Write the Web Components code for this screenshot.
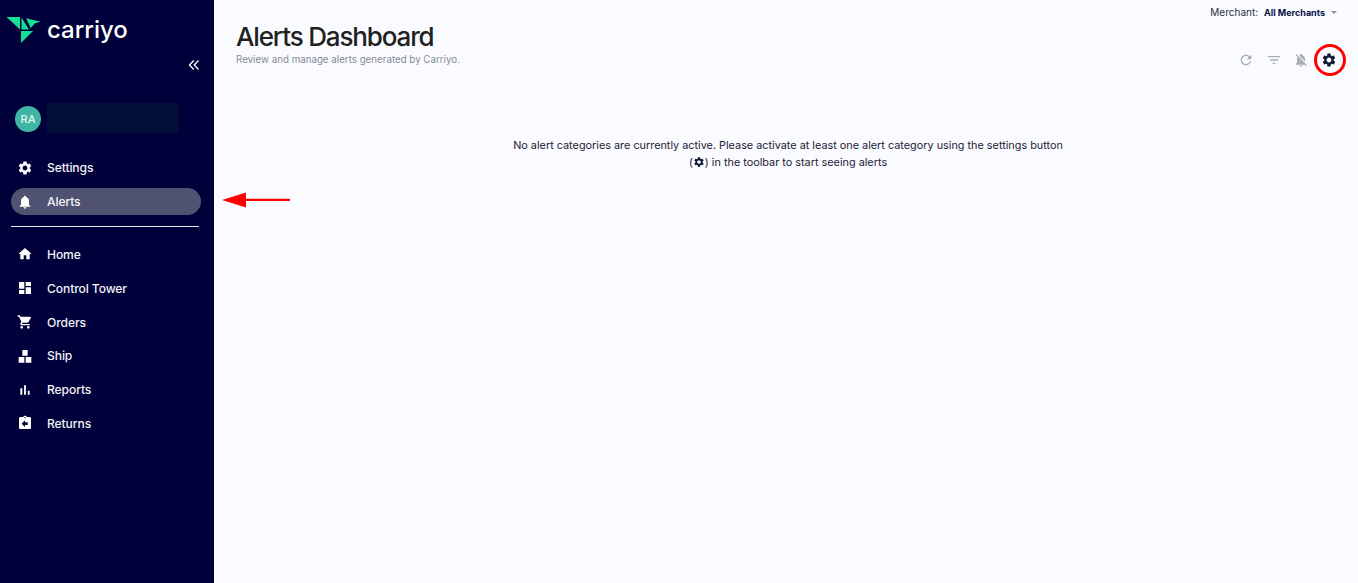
<!DOCTYPE html>
<html>
<head>
<meta charset="utf-8">
<title>Alerts Dashboard</title>
<style>
  html, body { margin: 0; height: 100%; }
  body { font-family: Inter, "Liberation Sans", sans-serif; background: #f9fbff; overflow: hidden; }
</style>
</head>
<body>
<app-shell>
  <side-bar slot="side">
    <nav-item slot="top" icon="settings">Settings</nav-item>
    <nav-item slot="top" icon="bell" active>Alerts</nav-item>
    <nav-item icon="home">Home</nav-item>
    <nav-item icon="dashboard">Control Tower</nav-item>
    <nav-item icon="cart">Orders</nav-item>
    <nav-item icon="ship">Ship</nav-item>
    <nav-item icon="reports">Reports</nav-item>
    <nav-item icon="returns">Returns</nav-item>
  </side-bar>
  <alerts-page></alerts-page>
</app-shell>

<script>
  const ICONS = {
    settings: 'M19.14 12.94c.04-.3.06-.61.06-.94 0-.32-.02-.64-.07-.94l2.03-1.58c.18-.14.23-.41.12-.61l-1.92-3.32c-.12-.22-.37-.29-.59-.22l-2.39.96c-.5-.38-1.03-.7-1.62-.94l-.36-2.54c-.04-.24-.24-.41-.48-.41h-3.84c-.24 0-.43.17-.47.41l-.36 2.54c-.59.24-1.13.57-1.62.94l-2.39-.96c-.22-.08-.47 0-.59.22L2.74 8.87c-.12.21-.08.47.12.61l2.03 1.58c-.05.3-.09.63-.09.94s.02.64.07.94l-2.03 1.58c-.18.14-.23.41-.12.61l1.92 3.32c.12.22.37.29.59.22l2.39-.96c.5.38 1.03.7 1.62.94l.36 2.54c.05.24.24.41.48.41h3.84c.24 0 .44-.17.47-.41l.36-2.54c.59-.24 1.13-.56 1.62-.94l2.39.96c.22.08.47 0 .59-.22l1.92-3.32c.12-.22.07-.47-.12-.61l-2.01-1.58zM12 15.6c-1.98 0-3.6-1.62-3.6-3.6s1.62-3.6 3.6-3.6 3.6 1.62 3.6 3.6-1.62 3.6-3.6 3.6z',
    bell: 'M12 22c1.1 0 2-.9 2-2h-4c0 1.1.89 2 2 2zm6-6v-5c0-3.07-1.64-5.64-4.5-6.32V4c0-.83-.67-1.5-1.5-1.5s-1.5.67-1.5 1.5v.68C7.63 5.36 6 7.92 6 11v5l-2 2v1h16v-1l-2-2z',
    home: 'M10 20v-6h4v6h5v-8h3L12 3 2 12h3v8z',
    dashboard: 'M3 13h8V3H3v10zm0 8h8v-6H3v6zm10 0h8V11h-8v10zm0-18v6h8V3h-8z',
    cart: 'M7 18c-1.1 0-1.99.9-1.99 2S5.9 22 7 22s2-.9 2-2-.9-2-2-2zM1 2v2h2l3.6 7.59-1.35 2.45c-.16.28-.25.61-.25.96 0 1.1.9 2 2 2h12v-2H7.42c-.14 0-.25-.11-.25-.25l.03-.12.9-1.63h7.45c.75 0 1.41-.41 1.75-1.03l3.58-6.49c.08-.14.12-.31.12-.48 0-.55-.45-1-1-1H5.21l-.94-2H1zm16 16c-1.1 0-1.99.9-1.99 2s.89 2 1.99 2 2-.9 2-2-.9-2-2-2z',
    ship: 'M8 3h8v8.5H8zM2.5 13.5H11V22H2.5zM13 13.5h8.5V22H13z',
    reports: 'M5 9.2h3V19H5zM10.6 5h2.8v14h-2.8zm5.6 8H19v6h-2.8z',
    returns: 'M19 3h-4.18C14.4 1.84 13.3 1 12 1c-1.3 0-2.4.84-2.82 2H5c-1.1 0-2 .9-2 2v14c0 1.1.9 2 2 2h14c1.1 0 2-.9 2-2V5c0-1.1-.9-2-2-2zm-7 0c.55 0 1 .45 1 1s-.45 1-1 1-1-.45-1-1 .45-1 1-1zm4 12h-4v3l-5-5 5-5v3h4v4z',
    refresh: 'M17.65 6.35C16.2 4.9 14.21 4 12 4c-4.42 0-7.99 3.58-7.99 8s3.57 8 7.99 8c3.73 0 6.84-2.55 7.73-6h-2.08c-.82 2.33-3.04 4-5.65 4-3.31 0-6-2.69-6-6s2.69-6 6-6c1.66 0 3.14.69 4.22 1.78L13 11h7V4l-2.35 2.35z',
    filter: 'M10 18h4v-2h-4v2zM3 6v2h18V6H3zm3 7h12v-2H6v2z',
    belloff: 'M20 18.69L7.84 6.14 5.27 3.49 4 4.76l2.8 2.8v.01c-.52.99-.8 2.16-.8 3.42v5l-2 2v1h13.73l2 2L21 19.72l-1-1.03zM12 22c1.11 0 2-.89 2-2h-4c0 1.11.89 2 2 2zm6-7.32V11c0-3.08-1.64-5.64-4.5-6.32V4c0-.83-.67-1.5-1.5-1.5s-1.5.67-1.5 1.5v.68c-.15.03-.29.08-.42.12-.1.03-.2.07-.3.11h-.01c-.2.08-.4.17-.59.27-.01 0-.01 0-.02.01L18 14.68z'
  };

  const svgIcon = (name, size, color) =>
    `<svg width="${size}" height="${size}" viewBox="0 0 24 24" fill="${color}"><path d="${ICONS[name]}"/></svg>`;

  class AppShell extends HTMLElement {
    connectedCallback() {
      this.attachShadow({ mode: 'open' });
      this.shadowRoot.innerHTML = `
        <style>
          :host { display: flex; height: 100vh; }
          main { flex: 1; min-width: 0; }
        </style>
        <slot name="side"></slot>
        <main><slot></slot></main>
      `;
    }
  }

  class SideBar extends HTMLElement {
    connectedCallback() {
      this.attachShadow({ mode: 'open' });
      this.shadowRoot.innerHTML = `
        <style>
          :host {
            display: flex;
            flex-direction: column;
            width: 214px;
            flex: none;
            height: 100%;
            background: #00003a;
            color: #fff;
            font-family: Inter, sans-serif;
          }
          .brand { display: flex; align-items: flex-start; height: 44px; padding: 15px 0 0 6px; gap: 6px; }
          .brand span {
            font-family: Inter, sans-serif;
            font-size: 24px;
            font-weight: 500;
            line-height: 30px;
          }
          .collapse { display: flex; justify-content: flex-end; padding: 0 15px 0 0; height: 14px; margin-top: 1px; }
          .user { display: flex; align-items: center; gap: 6px; margin: 30px 0 0 15px; height: 30px; }
          .avatar {
            width: 26px; height: 26px; border-radius: 50%;
            background: #3fb5a3;
            display: flex; align-items: center; justify-content: center;
            font-size: 11px; font-weight: 500; color: #e8f5f3;
          }
          .name { width: 132px; height: 30px; background: #021038; margin-bottom: 2px; }
          .top { display: flex; flex-direction: column; margin-top: 17px; padding: 0 13px 0 11px; }
          hr { border: 0; height: 1px; background: #e6e6ee; margin: 7px 15px 11px 11px; }
          .list { display: flex; flex-direction: column; padding: 0 13px 0 11px; }
        </style>
        <div class="brand">
          <svg width="35" height="30" viewBox="0 0 35 30" fill="#15df96">
            <path d="M.5 2H14V14.5Z"/>
            <path d="M15.5 2.5L23 14.5H15.5Z"/>
            <path d="M20 3.3L34.7 6.7L29 8.3L24.7 13Z"/>
            <path d="M15 16H27L15 28Z"/>
          </svg>
          <span>carriyo</span>
        </div>
        <div class="collapse">
          <svg width="10" height="10" viewBox="0 0 10 10" fill="none" stroke="#fff" stroke-width="1.3">
            <path d="M4.8 .5L.5 5L4.8 9.5M9.5 .5L5.2 5L9.5 9.5"/>
          </svg>
        </div>
        <div class="user"><div class="avatar">RA</div><div class="name"></div></div>
        <div class="top"><slot name="top"></slot></div>
        <hr>
        <div class="list"><slot></slot></div>
      `;
    }
  }

  class NavItem extends HTMLElement {
    connectedCallback() {
      this.attachShadow({ mode: 'open' });
      const active = this.hasAttribute('active');
      this.shadowRoot.innerHTML = `
        <style>
          :host { display: block; }
          .row {
            display: flex;
            align-items: center;
            height: 27px;
            margin: 3.4px 0;
            padding-left: 6px;
            gap: 14px;
            border-radius: 14px;
            font-size: 12.1px;
            font-weight: 500;
            letter-spacing: -.1px;
            color: #f2f3f8;
            background: ${active ? '#505272' : 'transparent'};
          }
          svg { flex: none; }
        </style>
        <div class="row">${svgIcon(this.getAttribute('icon'), 16, '#fff')}<slot></slot></div>
      `;
    }
  }

  class MerchantPicker extends HTMLElement {
    connectedCallback() {
      this.attachShadow({ mode: 'open' });
      this.shadowRoot.innerHTML = `
        <style>
          :host { display: flex; align-items: center; justify-content: flex-end; font-size: 10px; color: #2a2f45; height: 24px; }
          b { font-weight: 700; font-size: 9px; color: #0a0f45; margin-left: 6px; }
          i { width: 0; height: 0; border: 3.5px solid transparent; border-top-color: #8d8f9b; border-bottom: 0; margin-left: 6px; }
        </style>
        Merchant: <b>All Merchants</b><i></i>
      `;
    }
  }

  class AlertsPage extends HTMLElement {
    connectedCallback() {
      this.attachShadow({ mode: 'open' });
      this.shadowRoot.innerHTML = `
        <style>
          :host { display: block; position: relative; height: 100%; color: #1c1c24; }
          .top { padding: 0 21px 0 0; }
          .head { display: flex; justify-content: space-between; align-items: flex-start; padding-left: 22px; margin-top: -4px; }
          h1 { margin: 0; font-size: 26px; font-weight: 500; letter-spacing: -1.15px; line-height: 33px; color: #212121; }
          p { margin: 0; font-size: 9.75px; color: #858a94; line-height: 13px; }
          .tools { display: flex; align-items: center; gap: 11.67px; margin: 32px 21px 0 0; }
          .tools svg { display: block; }
          .msg {
            margin: 69px auto 0;
            width: 600px;
            text-align: center;
            font-size: 10.85px;
            line-height: 17px;
            font-weight: 400;
            color: #1d2135;
            transform: translateX(2px);
          }
          .msg svg { vertical-align: -2px; }
          .ring {
            position: absolute; left: 1100px; top: 44px;
            width: 32px; height: 32px; box-sizing: border-box;
            border: 3px solid #f00; border-radius: 50%;
          }
          .arrow { position: absolute; left: 7px; top: 191px; }
        </style>
        <div class="top"><merchant-picker></merchant-picker></div>
        <div class="head">
          <div>
            <h1>Alerts Dashboard</h1>
            <p>Review and manage alerts generated by Carriyo.</p>
          </div>
          <div class="tools">
            ${svgIcon('refresh', 16, '#a9adb6')}
            ${svgIcon('filter', 16, '#a9adb6')}
            ${svgIcon('belloff', 16, '#a9adb6')}
            ${svgIcon('settings', 16, '#0f1b36')}
          </div>
        </div>
        <div class="msg">No alert categories are currently active. Please activate at least one alert category using the settings button<br>(${svgIcon('settings', 12, '#0f1b36')}) in the toolbar to start seeing alerts</div>
        <div class="ring"></div>
        <svg class="arrow" width="70" height="18" viewBox="0 0 70 18">
          <path d="M1 9L25 1.5V7.8H69V10H25V16.5Z" fill="#f00"/>
        </svg>
      `;
    }
  }

  customElements.define('app-shell', AppShell);
  customElements.define('side-bar', SideBar);
  customElements.define('nav-item', NavItem);
  customElements.define('merchant-picker', MerchantPicker);
  customElements.define('alerts-page', AlertsPage);
</script>
</body>
</html>
